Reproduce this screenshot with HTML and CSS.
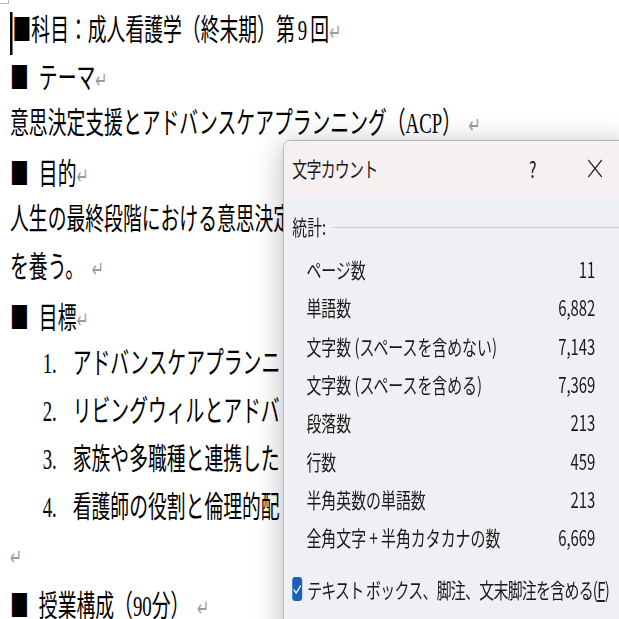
FILE: index.html
```html
<!DOCTYPE html>
<html lang="ja">

<head>
  <meta charset="UTF-8">
  <title>文字カウント</title>
  <link rel="stylesheet" href="styles.css">
</head>

<body>
  <span class="corner"></span>
  <div class="doc">
    <p><span class="cursor"></span><span class="mark tight">■</span>科目：成人看護学（終末期）第<span class="num9">9</span>回<span class="pm">↵</span></p>
    <p><span class="mark">■</span>テーマ<span class="pm">↵</span></p>
    <p>意思決定支援とアドバンスケアプランニング（ACP）<span class="pm gap">↵</span></p>
    <p><span class="mark">■</span>目的<span class="pm">↵</span></p>
    <p>人生の最終段階における意思決定</p>
    <p>を養う。<span class="pm gap">↵</span></p>
    <p><span class="mark">■</span>目標<span class="pm">↵</span></p>
    <div class="item"><span class="no">1.</span>アドバンスケアプランニ</div>
    <div class="item"><span class="no">2.</span>リビングウィルとアドバ</div>
    <div class="item"><span class="no">3.</span>家族や多職種と連携した</div>
    <div class="item"><span class="no">4.</span>看護師の役割と倫理的配</div>
    <p><span class="pm">↵</span></p>
    <p class="last"><span class="mark">■</span>授業構成（90分）<span class="pm gap">↵</span></p>
  </div>

  <div class="dialog">
    <div class="dlg-head">
      <span class="dlg-title">文字カウント</span>
      <span class="help">?</span>
      <svg class="close" width="21" height="19" viewBox="0 0 21 19">
        <path d="M1 1 L20 18 M20 1 L1 18" stroke="#1a1a1a" stroke-width="1.6" fill="none"/>
      </svg>
    </div>
    <div class="dlg-body">
      <div class="group"><span>統計:</span><span class="rule"></span></div>
      <div class="stats">
        <div class="row"><span>ページ数</span><span>11</span></div>
        <div class="row"><span>単語数</span><span>6,882</span></div>
        <div class="row"><span>文字数 (スペースを含めない)</span><span>7,143</span></div>
        <div class="row"><span>文字数 (スペースを含める)</span><span>7,369</span></div>
        <div class="row"><span>段落数</span><span>213</span></div>
        <div class="row"><span>行数</span><span>459</span></div>
        <div class="row"><span>半角英数の単語数</span><span>213</span></div>
        <div class="row"><span>全角文字 + 半角カタカナの数</span><span>6,669</span></div>
      </div>
      <div class="check">
        <span class="box">
          <svg width="14" height="12" viewBox="0 0 14 12">
            <path d="M2 6.5 L5.5 10 L12 2.5" stroke="#fff" stroke-width="1.6" fill="none"/>
          </svg>
        </span>
        <span class="check-label">テキスト ボックス、脚注、文末脚注を含める(<u>F</u>)</span>
      </div>
    </div>
  </div>
</body>

</html>
```

FILE: styles.css
```css
html, body {
  margin: 0;
  height: 100%;
  overflow: hidden;
  background: #fff;
}

body {
  position: relative;
}

.corner {
  position: absolute;
  left: 0;
  top: 0;
  width: 8px;
  height: 3px;
  border-right: 1px solid #b5b5b5;
  border-bottom: 1px solid #b5b5b5;
}

/* document behind the dialog */
.doc {
  width: 987px;
  padding: 3px 0 0 16px;
  transform: scaleX(0.627);
  transform-origin: 0 0;
  font-family: "Liberation Serif", "Noto Sans CJK JP", serif;
  font-size: 30px;
  line-height: 48px;
  color: #000;
}

.doc p,
.doc .item {
  height: 48px;
  margin: 0;
  white-space: nowrap;
}

.doc p.last {
  height: 36px;
  line-height: 36px;
  padding-top: 6px;
}

.cursor {
  display: inline-block;
  width: 4px;
  height: 43px;
  background: #000;
  vertical-align: middle;
}

.mark {
  font-family: "Noto Sans CJK JP", sans-serif;
  margin-right: 16px;
}

.mark.tight {
  margin-right: 0;
}

.num9 {
  margin: 0 5px;
}

.pm {
  font-family: "DejaVu Sans", sans-serif;
  font-size: 23px;
  color: #9a9a9a;
}

.pm.gap {
  margin-left: 12px;
}

.item {
  display: flex;
  padding-left: 52px;
}

.item .no {
  width: 48px;
}

/* word count dialog */
.dialog {
  position: absolute;
  left: 283px;
  top: 140px;
  width: 486px;
  height: 520px;
  transform: scaleX(0.71);
  transform-origin: 0 0;
  border: 1px solid #a9a9a9;
  border-radius: 9px;
  background: #eff0f3;
  box-shadow: 0 4px 34px rgba(0, 0, 0, 0.28);
  font-family: "Noto Sans CJK JP", sans-serif;
  font-size: 21px;
  color: #1a1a1a;
  overflow: hidden;
}

.dlg-head {
  display: flex;
  align-items: center;
  height: 54px;
  padding-left: 12px;
  background: #f7f0f1;
}

.dlg-title {
  flex: 1;
  letter-spacing: -1px;
}

.help {
  margin-right: 72px;
  font-size: 22px;
}

.close {
  margin-right: 37px;
}

.dlg-body {
  padding: 12px 47px 0 12px;
}

.group {
  display: flex;
  align-items: center;
  height: 38px;
}

.group .rule {
  flex: 1;
  height: 1px;
  margin: 2px -47px 0 8px;
  background: #cfd0d3;
}

.stats {
  margin-top: 5px;
  padding-left: 20px;
}

.row {
  display: flex;
  justify-content: space-between;
  align-items: center;
  height: 38.3px;
  white-space: nowrap;
}

.check {
  display: flex;
  align-items: center;
  height: 38px;
  margin-top: 14px;
  white-space: nowrap;
}

.box {
  display: flex;
  align-items: center;
  justify-content: center;
  width: 24px;
  height: 24px;
  margin-right: 7px;
  border-radius: 4px;
  background: #1b60b8;
}

.check-label {
  letter-spacing: -1px;
}
```
